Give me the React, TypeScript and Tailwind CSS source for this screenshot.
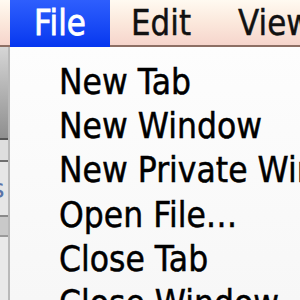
const MENU_ITEMS = ["New Tab", "New Window", "New Private Window", "Open File…", "Close Tab", "Close Window"];

export default function App() {
  return (
    <div
      className="w-[300px] h-[300px] overflow-hidden flex flex-col bg-white"
      style={{ fontFamily: '"DejaVu Sans", "Liberation Sans", sans-serif' }}
    >
      {/* menu bar */}
      <div className="h-[47px] shrink-0 flex border-b-2 border-[#8d6f64] bg-gradient-to-b from-[#fffaf1] via-[#fbe8dc] to-[#f6d5cc] text-[31px] leading-[45px] text-[#111] [-webkit-text-stroke:0.4px_#111]">
        <div className="ml-[10px] h-[47px] w-[100px] shrink-0 pl-[24px] bg-gradient-to-b from-[#2e5efd] to-[#0636ef] text-white [-webkit-text-stroke:0.7px_white] whitespace-nowrap">
          <span className="inline-block scale-y-[1.15]">File</span>
        </div>
        <div className="pl-[21px] shrink-0 whitespace-nowrap">
          <span className="inline-block scale-y-[1.15]">Edit</span>
        </div>
        <div className="pl-[47px] shrink-0 whitespace-nowrap">
          <span className="inline-block scale-y-[1.15]">View</span>
        </div>
      </div>

      <div className="flex-1 flex min-h-0">
        {/* window behind the menu */}
        <div className="w-[10px] shrink-0 flex flex-col border-r-2 border-[#b9b9b9]">
          <div className="h-[93px] bg-gradient-to-b from-[#d6d6d6] to-[#8f8f8f] border-b-2 border-[#555]" />
          <div className="h-[22px] bg-[#dedede] border-b-2 border-[#6f6f6f]" />
          <div className="h-[55px] bg-[#e6e6e6] border-b-2 border-[#8a8a8a] flex items-center">
            <span className="text-[26px] leading-none text-[#5a74a8] -ml-[9px]">s</span>
          </div>
          <div className="h-[20px] bg-[#c9c9c9] border-b-2 border-[#9a9a9a]" />
          <div className="flex-1 bg-[#e9e9e9]" />
        </div>

        {/* dropdown */}
        <div className="flex-1 pt-[12px] pl-[49px] bg-gradient-to-b from-[#fdfdfd] to-[#f7f7f7] text-[31.5px] leading-[44px] text-black [-webkit-text-stroke:0.45px_black]">
          {MENU_ITEMS.map((item) => (
            <div key={item} className="h-[44.2px] whitespace-nowrap">
              <span className="inline-block scale-y-[1.14]">{item}</span>
            </div>
          ))}
        </div>
      </div>
    </div>
  );
}
